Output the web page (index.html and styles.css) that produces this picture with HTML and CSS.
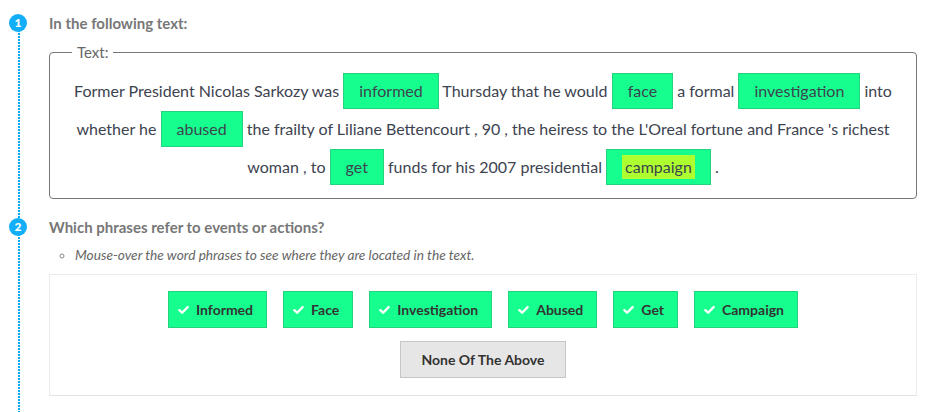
FILE: index.html
```html
<!DOCTYPE html>
<html>
<head>
<meta charset="utf-8">
<link rel="stylesheet" href="styles.css">
</head>
<body>
<div class="timeline">
  <section class="step step-one">
    <span class="badge">1</span>
    <h2 class="step-title">In the following text:</h2>
    <fieldset class="passage">
      <legend class="passage-legend">Text:</legend>
      <p class="passage-text">Former President Nicolas Sarkozy was <span class="hl">informed</span> Thursday that he would <span class="hl">face</span> a formal <span class="hl">investigation</span> into whether he <span class="hl">abused</span> the frailty of Liliane Bettencourt , 90 , the heiress to the L'Oreal fortune and France 's richest woman , to <span class="hl">get</span> funds for his 2007 presidential <span class="hl"><span class="hover">campaign</span></span> .</p>
    </fieldset>
  </section>
  <section class="step step-two">
    <span class="badge">2</span>
    <h2 class="step-title">Which phrases refer to events or actions?</h2>
    <ul class="hints">
      <li>Mouse-over the word phrases to see where they are located in the text.</li>
    </ul>
    <div class="choices">
      <div class="choice-row">
        <button class="choice"><svg class="check" viewBox="0 0 12 10"><path d="M1.5 5.2 L4.5 8 L10.5 1.8" /></svg>Informed</button>
        <button class="choice"><svg class="check" viewBox="0 0 12 10"><path d="M1.5 5.2 L4.5 8 L10.5 1.8" /></svg>Face</button>
        <button class="choice"><svg class="check" viewBox="0 0 12 10"><path d="M1.5 5.2 L4.5 8 L10.5 1.8" /></svg>Investigation</button>
        <button class="choice"><svg class="check" viewBox="0 0 12 10"><path d="M1.5 5.2 L4.5 8 L10.5 1.8" /></svg>Abused</button>
        <button class="choice"><svg class="check" viewBox="0 0 12 10"><path d="M1.5 5.2 L4.5 8 L10.5 1.8" /></svg>Get</button>
        <button class="choice"><svg class="check" viewBox="0 0 12 10"><path d="M1.5 5.2 L4.5 8 L10.5 1.8" /></svg>Campaign</button>
      </div>
      <div class="choice-row">
        <button class="none-btn">None Of The Above</button>
      </div>
    </div>
  </section>
</div>
</body>
</html>
```

FILE: styles.css
```css
html, body {
  margin: 0;
  padding: 0;
  background: #fff;
}
body {
  font-family: Lato, "Open Sans", Arial, sans-serif;
  color: #444;
}
.timeline {
  position: relative;
  padding: 14px 18px 0 49px;
  min-height: 398px;
}
.timeline::before {
  content: "";
  position: absolute;
  left: 18px;
  top: 30px;
  bottom: 0;
  width: 2px;
  background: repeating-linear-gradient(to bottom, #0aa8f5 0 2px, transparent 2px 3px);
}
.step {
  position: relative;
}
.badge {
  position: absolute;
  left: -40px;
  top: 0;
  width: 18px;
  height: 18px;
  border-radius: 50%;
  background: #12aef8;
  color: #fff;
  font-size: 12px;
  font-weight: 900;
  line-height: 18px;
  text-align: center;
  z-index: 1;
}
.step-title {
  margin: 0;
  font-size: 15px;
  line-height: 18px;
  font-weight: 700;
  color: #777;
}
.passage {
  margin: 12px 0 0 0;
  padding: 11px 20px 12px;
  border: 1px solid #777;
  border-radius: 4px;
  min-width: 0;
}
.passage-legend {
  margin-left: 2px;
  padding: 0 5px;
  font-size: 15px;
  line-height: 17px;
  color: #666;
}
.passage-text {
  margin: 0;
  text-align: center;
  font-size: 16px;
  line-height: 38px;
  color: #3d4350;
}
.hl {
  display: inline-block;
  height: 36px;
  line-height: 34px;
  padding: 0 15px;
  box-sizing: border-box;
  background: #16ff8e;
  border: 1px solid #25d27d;
  vertical-align: baseline;
}
.hover {
  display: inline-block;
  background: #adff2f;
  line-height: 24px;
  padding: 0 3px;
}
.step-two {
  margin-top: 19px;
}
.hints {
  margin: 10px 0 0 0;
  padding: 0 0 0 26px;
  list-style: circle;
  font-size: 13.7px;
  line-height: 18px;
  font-style: italic;
  color: #666;
}
.hints li::marker {
  font-size: 13px;
  color: #888;
}
.choices {
  margin-top: 10px;
  border: 1px solid #ebebeb;
  border-bottom-color: #e2e2e2;
  padding: 16px 0 17px;
  display: flex;
  flex-direction: column;
  align-items: center;
  gap: 13px;
}
.choice-row {
  display: flex;
  justify-content: center;
  gap: 16px;
}
.choice {
  display: inline-flex;
  align-items: center;
  height: 37px;
  padding: 0 13px 0 9px;
  background: #16ff8e;
  border: 1px solid #25d27d;
  font-family: Lato, "Open Sans", Arial, sans-serif;
  font-size: 14px;
  font-weight: 700;
  color: #333;
  cursor: pointer;
}
.check {
  width: 11px;
  height: 10px;
  margin-right: 7px;
  fill: none;
  stroke: #fff;
  stroke-width: 2.6;
  stroke-linecap: round;
  stroke-linejoin: round;
}
.none-btn {
  height: 37px;
  padding: 0 20px;
  background: #e6e6e6;
  border: 1px solid #c6c6c6;
  font-family: Lato, "Open Sans", Arial, sans-serif;
  font-size: 14px;
  font-weight: 700;
  color: #333;
  cursor: pointer;
}
```
